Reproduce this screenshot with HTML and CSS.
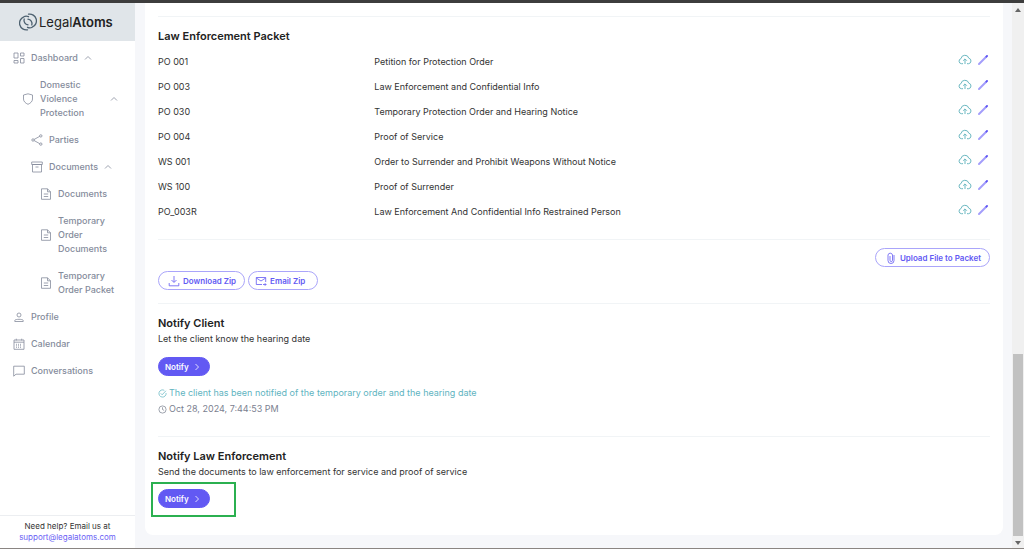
FILE: index.html
```html
<!DOCTYPE html>
<html lang="en">
<head>
<meta charset="utf-8">
<meta name="viewport" content="width=device-width, initial-scale=1">
<title>LegalAtoms - Temporary Order Packet</title>
<link rel="stylesheet" href="styles.css">
</head>
<body>

<!-- icons shared by several rows -->
<svg class="sprite" aria-hidden="true">
  <symbol id="i-up" viewBox="0 0 8 8"><path d="M1 5.5 4 2.5 7 5.5"/></symbol>
  <symbol id="i-next" viewBox="0 0 8 8"><path d="M2.5 1 5.5 4 2.5 7"/></symbol>
  <symbol id="i-doc" viewBox="0 0 12 12"><path d="M1.5.8h6l3 3v7.5h-9zM7.5.8v3h3M3.8 6h4.4M3.8 8.5h4.4"/></symbol>
  <symbol id="i-cloud" viewBox="0 0 14 12"><path d="M5 9.7H3.4A2.6 2.6 0 0 1 3 4.6a4 4 0 0 1 7.8-.4A2.8 2.8 0 0 1 10.6 9.7H9M7 10V5M5.2 6.7 7 4.9l1.8 1.8"/></symbol>
  <symbol id="i-pencil" viewBox="0 0 12 12"><path stroke="#a39dfb" stroke-width="2" d="M2 10 9 3"/><path stroke="#5d54f3" stroke-width="2" d="M9.4 2.6 10 2"/></symbol>
</svg>

<div class="topbar"></div>

<div class="app">
  <aside class="sidebar">
    <a class="brand" href="#">
      <svg class="logo" viewBox="0 0 18 18" aria-hidden="true">
        <path d="M9.500 1.200A6.800 6.800 0 0 1 13.200 14.200C11.500 15.200 10 15 8.500 14.300"/>
        <path d="M8.500 16.800A6.800 6.800 0 0 1 4.800 3.800C6.500 2.800 8 3 9.500 3.700"/>
        <path d="M5.200 6A4.500 4.500 0 0 0 9 11.800M12.800 12A4.500 4.500 0 0 0 9 6.200"/>
      </svg>
      <span>Legal<b>Atoms</b></span>
    </a>

    <nav class="nav">
      <a href="#">
        <svg class="icon" viewBox="0 0 12 12"><path d="M1 1h4v5H1zM7.500 1H11v3H7.500zM1 8.500h4V11H1zM7.500 6.500H11V11H7.500z"/></svg>
        <span>Dashboard</span>
        <svg class="chevron"><use href="#i-up"/></svg>
      </a>
      <a class="level-1" href="#">
        <svg class="icon" viewBox="0 0 12 12"><path d="M6 .8 10.500 2v4c0 2.500-2 4.200-4.500 5.300C3.500 10.200 1.500 8.500 1.500 6V2z"/></svg>
        <span class="grow">Domestic Violence Protection</span>
        <svg class="chevron"><use href="#i-up"/></svg>
      </a>
      <a class="level-2" href="#">
        <svg class="icon" viewBox="0 0 12 12"><path d="M3 5.500 8.800 2.300M3 6.500l5.800 3.200"/><circle cx="2" cy="6" r="1.200"/><circle cx="9.800" cy="1.900" r="1.200"/><circle cx="9.800" cy="10.100" r="1.200"/></svg>
        <span>Parties</span>
      </a>
      <a class="level-2" href="#">
        <svg class="icon" viewBox="0 0 12 12"><path d="M.7 1h10.600v2.500H.7zM1.500 3.500h9V11h-9zM4.500 6h3"/></svg>
        <span>Documents</span>
        <svg class="chevron"><use href="#i-up"/></svg>
      </a>
      <a class="level-3" href="#"><svg class="icon"><use href="#i-doc"/></svg><span>Documents</span></a>
      <a class="level-3" href="#"><svg class="icon"><use href="#i-doc"/></svg><span>Temporary Order Documents</span></a>
      <a class="level-3" href="#"><svg class="icon"><use href="#i-doc"/></svg><span>Temporary Order Packet</span></a>
      <a href="#">
        <svg class="icon" viewBox="0 0 12 12"><circle cx="6" cy="4" r="2"/><path d="M1.800 10.500V9.300C2.500 8 9.500 8 10.200 9.300v1.200z"/></svg>
        <span>Profile</span>
      </a>
      <a href="#">
        <svg class="icon" viewBox="0 0 12 12"><path d="M1 2h10v9.300H1zM1 4.200h10M3.300.7V2.500M8.700.7V2.500"/><path stroke-dasharray="1 1" d="M3 6.300h6M3 7.800h6M3 9.300h6"/></svg>
        <span>Calendar</span>
      </a>
      <a href="#">
        <svg class="icon" viewBox="0 0 12 12"><path d="M.7 1.200h10.600v8H3L.7 11.200z"/></svg>
        <span>Conversations</span>
      </a>
    </nav>

    <div class="help">
      Need help? Email us at
      <a href="mailto:support@legalatoms.com">support@legalatoms.com</a>
    </div>
  </aside>

  <main class="content">
    <div class="card">
      <section>
        <h2>Law Enforcement Packet</h2>
        <table class="packet">
          <tr><td>PO 001</td><td>Petition for Protection Order</td><td class="actions"><button aria-label="Upload"><svg class="cloud"><use href="#i-cloud"/></svg></button><button aria-label="Edit"><svg class="pencil"><use href="#i-pencil"/></svg></button></td></tr>
          <tr><td>PO 003</td><td>Law Enforcement and Confidential Info</td><td class="actions"><button aria-label="Upload"><svg class="cloud"><use href="#i-cloud"/></svg></button><button aria-label="Edit"><svg class="pencil"><use href="#i-pencil"/></svg></button></td></tr>
          <tr><td>PO 030</td><td>Temporary Protection Order and Hearing Notice</td><td class="actions"><button aria-label="Upload"><svg class="cloud"><use href="#i-cloud"/></svg></button><button aria-label="Edit"><svg class="pencil"><use href="#i-pencil"/></svg></button></td></tr>
          <tr><td>PO 004</td><td>Proof of Service</td><td class="actions"><button aria-label="Upload"><svg class="cloud"><use href="#i-cloud"/></svg></button><button aria-label="Edit"><svg class="pencil"><use href="#i-pencil"/></svg></button></td></tr>
          <tr><td>WS 001</td><td>Order to Surrender and Prohibit Weapons Without Notice</td><td class="actions"><button aria-label="Upload"><svg class="cloud"><use href="#i-cloud"/></svg></button><button aria-label="Edit"><svg class="pencil"><use href="#i-pencil"/></svg></button></td></tr>
          <tr><td>WS 100</td><td>Proof of Surrender</td><td class="actions"><button aria-label="Upload"><svg class="cloud"><use href="#i-cloud"/></svg></button><button aria-label="Edit"><svg class="pencil"><use href="#i-pencil"/></svg></button></td></tr>
          <tr><td>PO_003R</td><td>Law Enforcement And Confidential Info Restrained Person</td><td class="actions"><button aria-label="Upload"><svg class="cloud"><use href="#i-cloud"/></svg></button><button aria-label="Edit"><svg class="pencil"><use href="#i-pencil"/></svg></button></td></tr>
        </table>
      </section>

      <div class="packet-buttons">
        <button class="btn upload">
          <svg class="icon" viewBox="0 0 12 12"><path d="M9 3v5.500a3 3 0 0 1-6 0V3a2.300 2.300 0 0 1 4.500 0v5.300a1.200 1.200 0 0 1-2.500 0V4"/></svg>
          Upload File to Packet
        </button>
        <div class="zip">
          <button class="btn">
            <svg class="icon" viewBox="0 0 12 12"><path d="M6 1v6M3.500 5 6 7.500 8.500 5M1.200 8v2.800h9.600V8"/></svg>
            Download Zip
          </button>
          <button class="btn email">
            <svg class="icon" viewBox="0 0 12 12"><path d="M7 9.500H1.300v-7h9.400V7M1.300 3 6 6l4.700-3M8 9.500h3M9.800 8.200l1.300 1.300-1.300 1.300"/></svg>
            Email Zip
          </button>
        </div>
      </div>

      <section class="notify">
        <h2>Notify Client</h2>
        <p>Let the client know the hearing date</p>
        <button class="btn primary">Notify <svg class="chevron"><use href="#i-next"/></svg></button>
        <div class="status">
          <p class="done">
            <svg viewBox="0 0 10 10"><path d="M9 4.500A4 4 0 1 1 7 1.500M3 4.800l1.600 1.600L8.800 2"/></svg>
            The client has been notified of the temporary order and the hearing date
          </p>
          <p class="time">
            <svg viewBox="0 0 10 10"><circle cx="5" cy="5" r="4"/><path d="M5 2.500V5l1.800 1"/></svg>
            Oct 28, 2024, 7:44:53 PM
          </p>
        </div>
      </section>

      <section class="notify">
        <h2>Notify Law Enforcement</h2>
        <p>Send the documents to law enforcement for service and proof of service</p>
        <div class="highlight">
          <button class="btn primary">Notify <svg class="chevron"><use href="#i-next"/></svg></button>
        </div>
      </section>
    </div>
  </main>

  <div class="scrollbar" aria-hidden="true">
    <svg viewBox="0 0 6 4"><path d="M0 4 3 0l3 4z"/></svg>
    <div class="track"><div class="thumb"></div></div>
    <svg viewBox="0 0 6 4"><path d="M0 0l3 4 3-4z"/></svg>
  </div>
</div>

</body>
</html>
```
FILE: styles.css
```css
* {
  box-sizing: border-box;
}

body {
  margin: 0;
  min-height: 100vh;
  display: flex;
  flex-direction: column;
  font-family: Inter, "Liberation Sans", sans-serif;
  font-size: 9px;
  color: #333;
  background: #f6f7fa;
  border-bottom: 1px solid #8a8582;
}

svg {
  fill: none;
  stroke: currentColor;
  stroke-width: 0.8;
  flex: none;
}

a {
  color: #6a61f5;
  text-decoration: none;
}

h2, p {
  margin: 0;
}

button {
  font: inherit;
  color: inherit;
  background: none;
  border: none;
  padding: 0;
}

.sprite {
  position: absolute;
  width: 0;
  height: 0;
}

.topbar {
  height: 3px;
  background: #3d3d3d;
}

.app {
  flex: 1;
  display: grid;
  grid-template-columns: 135px 1fr 12px;
}

/* sidebar */
.sidebar {
  display: flex;
  flex-direction: column;
  background: #fff;
}

.brand {
  display: flex;
  align-items: center;
  gap: 2px;
  height: 38px;
  padding-left: 19px;
  background: #e0e5e9;
  color: #222;
  font-size: 13px;
}

.brand b {
  font-weight: 600;
}

.logo {
  width: 18px;
  height: 18px;
  color: #4d6170;
  stroke-width: 1.3;
  stroke-linecap: round;
}

.nav {
  flex: 1;
  display: flex;
  flex-direction: column;
  gap: 13px;
  padding: 10px 17px 0 13px;
}

.nav a {
  display: flex;
  align-items: center;
  gap: 6px;
  color: #858c9c;
  font-weight: 500;
  line-height: 14px;
}

.nav .level-1 { padding-left: 9px; }
.nav .level-2 { padding-left: 18px; }
.nav .level-3 { padding-left: 27px; }

.grow {
  flex: 1;
}

.icon {
  width: 12px;
  height: 12px;
}

.chevron {
  width: 8px;
  height: 8px;
}

.help {
  padding: 5px 0;
  border-top: 1px solid #eceef1;
  font-size: 8px;
  line-height: 11px;
  text-align: center;
}

.help a {
  display: block;
}

/* main card */
.content {
  padding: 0 9px 13px 10px;
}

.card {
  height: 100%;
  padding: 13px 13px 0;
  background: #fff;
  border-radius: 0 0 8px 8px;
}

.card section {
  border-top: 1px solid #f1f4f6;
}

h2 {
  font-size: 11px;
  font-weight: 600;
  line-height: 16px;
  color: #222;
}

.card section > h2 {
  padding-top: 11px;
}

.packet {
  width: 100%;
  margin-top: 5px;
  border-collapse: collapse;
  table-layout: fixed;
}

.packet td {
  height: 25px;
  padding: 0;
}

.packet td:first-child {
  width: 26%;
}

.packet .actions {
  width: 40px;
  padding: 0 1px 3px 0;
  text-align: right;
  white-space: nowrap;
}

.actions button {
  margin-left: 5px;
  vertical-align: middle;
}

.actions svg {
  display: block;
  height: 12px;
}

.cloud {
  width: 14px;
  color: #6bb8c1;
  stroke-width: 1;
}

.pencil {
  width: 12px;
  stroke-linecap: round;
}

.packet-buttons {
  margin-top: 15px;
  padding: 8px 0 13px;
  border-top: 1px solid #f1f4f6;
}

.btn {
  display: flex;
  align-items: center;
  gap: 3px;
  height: 19px;
  padding: 0 8px 0 9px;
  border: 1px solid #aaa5fa;
  border-radius: 10px;
  color: #6259f3;
  font-size: 8px;
  font-weight: 600;
}

.upload {
  margin-left: auto;
}

.zip {
  display: flex;
  gap: 3px;
  margin-top: 4px;
}

.email {
  padding: 0 12px 0 6px;
}

.primary {
  gap: 4px;
  padding: 0 8px 0 6px;
  border-color: #6259f3;
  background: #6259f3;
  color: #fff;
}

.notify > p {
  line-height: 16px;
}

.notify > .primary {
  margin-top: 10px;
}

.status {
  padding: 9px 0 19px;
  line-height: 16px;
}

.status p {
  display: flex;
  align-items: center;
  gap: 2px;
}

.status svg {
  width: 9px;
  height: 9px;
}

.done { color: #5fb4bf; }
.time { color: #7b8190; }

.highlight {
  width: 85px;
  margin: 2px 0 0 -7px;
  padding: 5px 5px 7px;
  border: 2px solid #2bb050;
}

/* scrollbar */
.scrollbar {
  display: flex;
  flex-direction: column;
  align-items: center;
  padding: 5px 0 3px;
  background: #f0f0f0;
}

.scrollbar svg {
  width: 6px;
  height: 4px;
  fill: #666;
  stroke: none;
}

.track {
  flex: 1;
  display: flex;
  align-items: flex-end;
  width: 10px;
  padding: 3px 0 5px;
}

.thumb {
  width: 100%;
  height: 35%;
  background: #c1c1c1;
}
```
